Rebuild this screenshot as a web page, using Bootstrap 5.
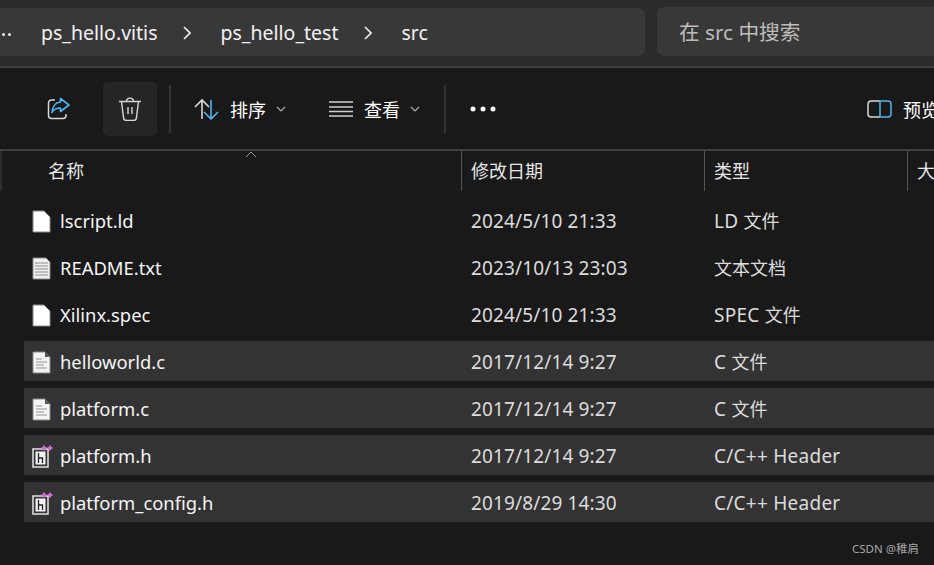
<!doctype html>
<html lang="zh"><head><meta charset="utf-8"><title>src</title>
<link rel="stylesheet" href="https://cdn.jsdelivr.net/npm/bootstrap@5.3.0/dist/css/bootstrap.min.css">
<style>
html,body{height:100%}
body{width:934px;height:565px;overflow:hidden;background:#191919;color:#f2f2f2;font-family:"Noto Sans","Noto Sans CJK SC",sans-serif;font-size:18px;line-height:24px}
.shell{position:relative;height:565px}
.addr{height:68px;background:#2b2b2b;border-bottom:2px solid #404040;padding:8px 0 10px;overflow:hidden}
.crumb{width:645px;height:48px;background:#383838;border-radius:0 7px 7px 0;flex:none;font-size:19.500px;color:#f2f2f2;white-space:nowrap;padding-top:2px}
.dots{width:41px;padding-left:2px}
.dots i{display:inline-block;width:3px;height:3px;border-radius:50%;background:#eee;margin-right:3px;vertical-align:middle}
.sep{width:63px}
.sep svg{margin-left:-3px}
.find{margin-left:12px;flex:1;height:49px;margin-top:-1px;background:#383838;border-radius:7px 0 0 7px;padding-left:22px;color:#bdbdbd;font-size:20.700px}
.tools{height:83px;border-bottom:2px solid #404040;background:#191919;overflow:hidden;white-space:nowrap;padding-left:47px}
.tools svg{flex:none}
.tbox{width:54px;height:54px;border-radius:5px;flex:none;margin-left:33px}
.vline{width:2px;height:48px;background:#333;flex:none}
.v1{margin-left:12px}
.v2{margin-left:24px}
.sorti{margin-left:23px}
.viewi{margin-left:43px}
.caretd{margin-left:10px}
.more{margin-left:24px}
.panei{margin-left:371px}
.tlabel{color:#fff;font-size:18px;margin-left:11px;flex:none;padding-top:2px}
.cols{height:40px;position:relative;font-size:18px;color:#e6e6e6;border-left:2px solid #2c2c2c}
.hc{height:40px;flex:none;padding-left:9px;border-left:1px solid #555;display:flex;align-items:center;white-space:nowrap}
.hname{width:459px;padding-left:46px;border-left:0}
.hdate{width:243px}.htype{width:203px}.hsize{flex:1;overflow:hidden}
.caret-up{position:absolute;left:243px;top:0}
.rows{padding-top:9px}
.frow{height:40px;margin:0 0 7px 24px;padding-top:2px;display:flex;align-items:center;color:#ededed;font-size:19px}
.frow.sel{background:#333}
.fname{width:447px;flex:none;display:flex;align-items:center;color:#f5f5f5;font-size:18.400px}
.fname svg{margin-left:8px;margin-right:9px;flex:none}
.fname svg.hdr{margin-left:8px;margin-right:7px}
.fdate{width:243px;flex:none;color:#dcdcdc;letter-spacing:.13px}
.ftype{flex:1;color:#dcdcdc;letter-spacing:.25px}
.ftype span{font-size:18px;letter-spacing:0}
.mark-csdn{position:absolute;right:15px;top:541px;font-size:11.500px;line-height:16px;color:#a8a8a8}
</style></head><body>
<div class="shell">
<div class="addr d-flex">
  <div class="crumb d-flex align-items-center">
    <span class="dots"><i></i><i></i></span><span>ps_hello.vitis</span>
    <span class="sep d-flex justify-content-center"><svg width="8" height="14" viewBox="0 0 8 14"><path d="M1 1l6 6-6 6" fill="none" stroke="#eee" stroke-width="1.6"/></svg></span>
    <span>ps_hello_test</span>
    <span class="sep d-flex justify-content-center"><svg width="8" height="14" viewBox="0 0 8 14"><path d="M1 1l6 6-6 6" fill="none" stroke="#eee" stroke-width="1.6"/></svg></span>
    <span>src</span>
  </div>
  <div class="find d-flex align-items-center">在 src 中搜索</div>
</div>
<div class="tools d-flex align-items-center">
  <svg width="23" height="23" viewBox="0 0 23 23" fill="none"><path d="M8 3H4.500A3 3 0 0 0 1.500 6v12.500a3 3 0 0 0 3 3H16a3 3 0 0 0 3-3V17" stroke="#d8d8d8" stroke-width="1.500"/><path d="M13.500 1.500l8.500 6.500-8.500 6.500V11c-4 0-6.500 1-8.500 4.500C5.500 9.500 8.500 5.500 13.500 5z" stroke="#4db5f0" stroke-width="1.600" stroke-linejoin="round"/></svg>
  <div class="tbox d-flex align-items-center justify-content-center" style="background:#252525">
    <svg width="22" height="24" viewBox="0 0 22 24" fill="none" stroke="#d8d8d8" stroke-width="1.400"><path d="M0 4.500h22M7.500 4.500c0-4.500 7-4.500 7 0M2.500 4.500l2 16a3 3 0 0 0 3 3h7a3 3 0 0 0 3-3l2-16M9 10v7M13 10v7"/></svg>
  </div>
  <div class="vline v1"></div>
  <svg class="sorti" width="25" height="22" viewBox="0 0 25 22" fill="none" stroke-width="1.600"><path d="M8 21V2M1 9l7-7 7 7" stroke="#d8d8d8"/><path d="M17 2v19M10 14l7 7 7-7" stroke="#4db5f0"/></svg>
  <span class="tlabel">排序</span>
  <svg class="caretd" width="10" height="6" viewBox="0 0 10 6" fill="none"><path d="M1 1l4 4 4-4" stroke="#aaa" stroke-width="1.200"/></svg>
  <svg class="viewi" width="24" height="16" viewBox="0 0 24 16" stroke="#d0d0d0" stroke-width="1.400"><path d="M0 1h24M0 6h24M0 10.500h24M0 15h24"/></svg>
  <span class="tlabel">查看</span>
  <svg class="caretd" width="10" height="6" viewBox="0 0 10 6" fill="none"><path d="M1 1l4 4 4-4" stroke="#aaa" stroke-width="1.200"/></svg>
  <div class="vline v2"></div>
  <svg class="more" width="26" height="6" viewBox="0 0 26 6" fill="#fff"><circle cx="3" cy="3" r="2.500"/><circle cx="13" cy="3" r="2.500"/><circle cx="23" cy="3" r="2.500"/></svg>
  <svg class="panei" width="25" height="18" viewBox="0 0 25 18" fill="none" stroke-width="1.500"><path d="M13 1H4a3 3 0 0 0-3 3v10a3 3 0 0 0 3 3h9" stroke="#d8d8d8"/><path d="M13 1h8a3 3 0 0 1 3 3v10a3 3 0 0 1-3 3h-8z" stroke="#4db5f0"/></svg>
  <span class="tlabel">预览</span>
</div>
<div class="cols d-flex">
  <div class="hc hname">名称</div><div class="hc hdate">修改日期</div><div class="hc htype">类型</div><div class="hc hsize">大</div>
  <svg class="caret-up" width="12" height="7" viewBox="0 0 12 7" fill="none"><path d="M1 6l5-5 5 5" stroke="#9a9a9a" stroke-width="1"/></svg>
</div>
<div class="rows">
  <div class="frow"><div class="fname"><svg width="19" height="23" viewBox="0 0 19 23"><path d="M1 1h11l6 6v15H1z" fill="#fff" stroke="#8a8a8a"/></svg>lscript.ld</div><div class="fdate">2024/5/10 21:33</div><div class="ftype">LD <span>文件</span></div></div>
  <div class="frow"><div class="fname"><svg width="19" height="23" viewBox="0 0 19 23"><path d="M1 1h13l4 4v17H1z" fill="#f0f0f0" stroke="#8a8a8a"/><path d="M3 6h13M3 9h13M3 12h13M3 15h13M3 18h13" stroke="#8c8c8c"/></svg>README.txt</div><div class="fdate">2023/10/13 23:03</div><div class="ftype"><span>文本文档</span></div></div>
  <div class="frow"><div class="fname"><svg width="19" height="23" viewBox="0 0 19 23"><path d="M1 1h11l6 6v15H1z" fill="#fff" stroke="#8a8a8a"/></svg>Xilinx.spec</div><div class="fdate">2024/5/10 21:33</div><div class="ftype">SPEC <span>文件</span></div></div>
  <div class="frow sel"><div class="fname"><svg width="19" height="23" viewBox="0 0 19 23"><path d="M1 1h12l5 5v16H1z" fill="#f4f4f4" stroke="#8a8a8a"/><path d="M13 1v5h5" fill="#555"/><path d="M4 8h6M4 11h11M4 14h8M4 17h11" stroke="#b4b4b4" stroke-width="1.300"/></svg>helloworld.c</div><div class="fdate">2017/12/14 9:27</div><div class="ftype">C <span>文件</span></div></div>
  <div class="frow sel"><div class="fname"><svg width="19" height="23" viewBox="0 0 19 23"><path d="M1 1h12l5 5v16H1z" fill="#f4f4f4" stroke="#8a8a8a"/><path d="M13 1v5h5" fill="#555"/><path d="M4 8h6M4 11h11M4 14h8M4 17h11" stroke="#b4b4b4" stroke-width="1.300"/></svg>platform.c</div><div class="fdate">2017/12/14 9:27</div><div class="ftype">C <span>文件</span></div></div>
  <div class="frow sel"><div class="fname"><svg class="hdr" width="21" height="23" viewBox="0 0 21 23"><path d="M1 4h15v18H1z" fill="#333" stroke="#e4e4e4" stroke-width="1.500"/><path d="M3.500 6.500h10v13h-10z" fill="#f2f2f2"/><path d="M6.500 8v10M6.500 13h4v5" fill="none" stroke="#222" stroke-width="1.300"/><path d="M9.500 3h5M12 .5v5M15.500 3h5M18 .5v5" stroke="#c86fd0" stroke-width="2"/></svg>platform.h</div><div class="fdate">2017/12/14 9:27</div><div class="ftype">C/C++ Header</div></div>
  <div class="frow sel"><div class="fname"><svg class="hdr" width="21" height="23" viewBox="0 0 21 23"><path d="M1 4h15v18H1z" fill="#333" stroke="#e4e4e4" stroke-width="1.500"/><path d="M3.500 6.500h10v13h-10z" fill="#f2f2f2"/><path d="M6.500 8v10M6.500 13h4v5" fill="none" stroke="#222" stroke-width="1.300"/><path d="M9.500 3h5M12 .5v5M15.500 3h5M18 .5v5" stroke="#c86fd0" stroke-width="2"/></svg>platform_config.h</div><div class="fdate">2019/8/29 14:30</div><div class="ftype">C/C++ Header</div></div>
</div>
<div class="mark-csdn">CSDN @稚肩</div>
</div>
</body></html>
